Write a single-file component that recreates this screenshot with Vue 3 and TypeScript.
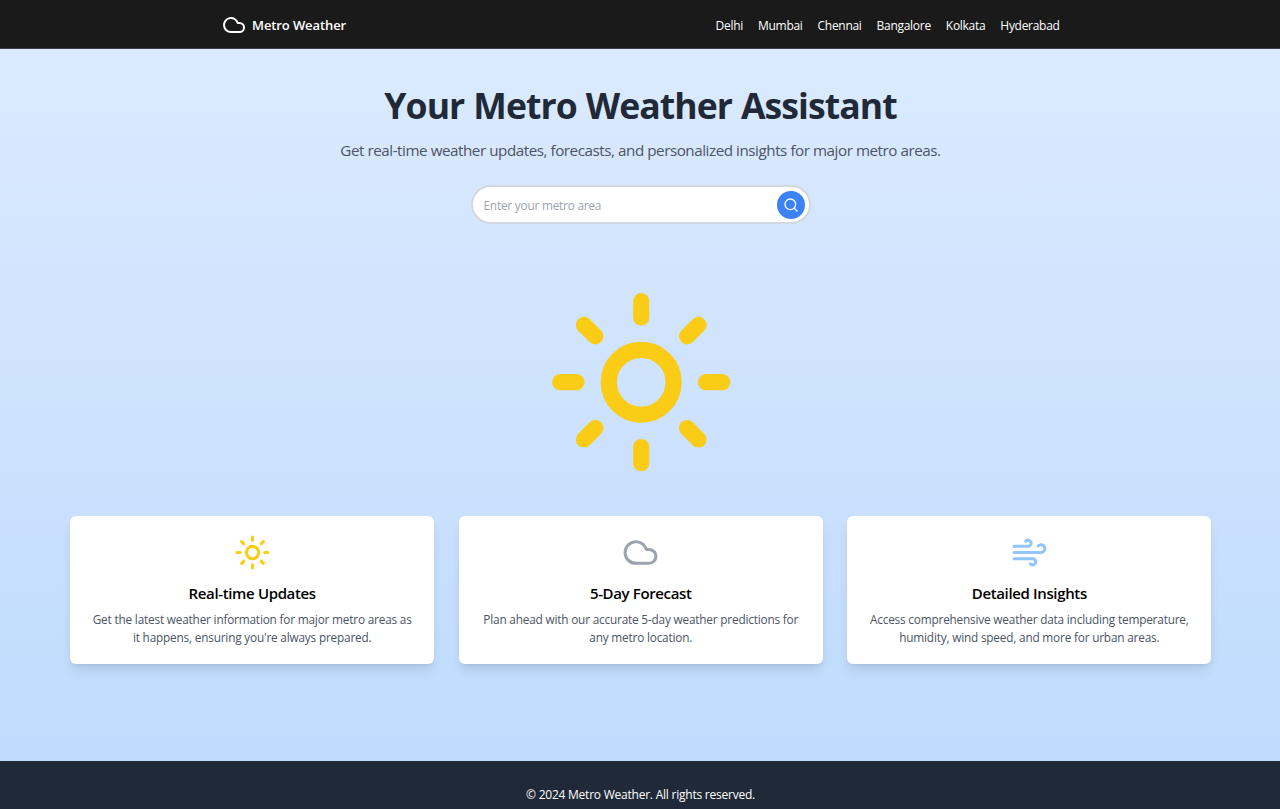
<script setup lang="ts">
type IconName = 'sun' | 'cloud' | 'wind'

interface Feature {
  icon: IconName
  title: string
  lines: string[]
}

const cities: string[] = ['Delhi', 'Mumbai', 'Chennai', 'Bangalore', 'Kolkata', 'Hyderabad']

const icons: Record<IconName, string[]> = {
  sun: [
    'M16 12a4 4 0 1 1-8 0a4 4 0 1 1 8 0Z',
    'M12 2v2',
    'M12 20v2',
    'm4.93 4.93 1.41 1.41',
    'm17.66 17.66 1.41 1.41',
    'M2 12h2',
    'M20 12h2',
    'm6.34 17.66-1.41 1.41',
    'm19.07 4.93-1.41 1.41',
  ],
  cloud: ['M17.5 19H9a7 7 0 1 1 6.71-9h1.79a4.5 4.5 0 1 1 0 9Z'],
  wind: [
    'M17.7 7.7a2.5 2.5 0 1 1 1.8 4.3H2',
    'M9.6 4.6A2 2 0 1 1 11 8H2',
    'M12.6 19.4A2 2 0 1 0 14 16H2',
  ],
}

const features: Feature[] = [
  {
    icon: 'sun',
    title: 'Real-time Updates',
    lines: ['Get the latest weather information for major metro areas as', "it happens, ensuring you're always prepared."],
  },
  {
    icon: 'cloud',
    title: '5-Day Forecast',
    lines: ['Plan ahead with our accurate 5-day weather predictions for', 'any metro location.'],
  },
  {
    icon: 'wind',
    title: 'Detailed Insights',
    lines: ['Access comprehensive weather data including temperature,', 'humidity, wind speed, and more for urban areas.'],
  },
]
</script>

<template>
  <div class="page">
    <header class="header">
      <div class="brand">
        <svg class="icon brand-icon" viewBox="0 0 24 24"><path v-for="d in icons.cloud" :key="d" :d="d" /></svg>
        <span class="brand-name">Metro Weather</span>
      </div>
      <nav class="nav">
        <a v-for="city in cities" :key="city">{{ city }}</a>
      </nav>
    </header>

    <main class="main">
      <h1 class="title">Your Metro Weather Assistant</h1>
      <p class="subtitle">Get real-time weather updates, forecasts, and personalized insights for major metro areas.</p>
      <form class="search" @submit.prevent>
        <input class="search-input" type="text" placeholder="Enter your metro area" />
        <button class="search-button" type="submit" aria-label="Search">
          <svg class="icon search-icon" viewBox="0 0 24 24"><circle cx="11" cy="11" r="8" /><path d="m21 21-4.3-4.3" /></svg>
        </button>
      </form>
      <svg class="icon hero" viewBox="0 0 24 24"><path v-for="d in icons.sun" :key="d" :d="d" /></svg>
      <section class="cards">
        <article v-for="f in features" :key="f.title" class="card">
          <svg class="icon card-icon" :class="f.icon" viewBox="0 0 24 24"><path v-for="d in icons[f.icon]" :key="d" :d="d" /></svg>
          <h2 class="card-title">{{ f.title }}</h2>
          <p class="card-text"><span v-for="line in f.lines" :key="line">{{ line }}</span></p>
        </article>
      </section>
    </main>

    <footer class="footer">© 2024 Metro Weather. All rights reserved.</footer>
  </div>
</template>

<style>
body {
  margin: 0;
  overflow: hidden;
}
</style>

<style scoped>
.page {
  box-sizing: border-box;
  height: 809px;
  display: flex;
  flex-direction: column;
  font-family: 'Open Sans', 'Noto Sans', sans-serif;
  font-size: 12px;
  overflow: hidden;
}
.icon {
  display: block;
  flex: none;
  fill: none;
  stroke: currentColor;
  stroke-width: 2;
  stroke-linecap: round;
  stroke-linejoin: round;
}
.header {
  box-sizing: border-box;
  height: 49px;
  flex: none;
  display: flex;
  align-items: center;
  justify-content: space-between;
  padding: 1px 220.4px 0 222px;
  background: #1a1a1a;
  border-bottom: 1px solid #3c4046;
  color: #fff;
}
.brand {
  display: flex;
  align-items: center;
  gap: 6px;
}
.brand-icon {
  width: 24px;
  height: 24px;
}
.brand-name {
  font-size: 13px;
  font-weight: 600;
  letter-spacing: -0.1px;
  white-space: nowrap;
}
.nav {
  display: flex;
  gap: 15px;
  padding-top: 1px;
  letter-spacing: -0.29px;
}
.main {
  flex: none;
  box-sizing: border-box;
  height: 712px;
  padding: 32px 0 0 1px;
  display: flex;
  flex-direction: column;
  align-items: center;
  background: linear-gradient(to bottom, #dbeafe, #bfdbfe);
}
.title {
  margin: 0;
  font-size: 35.6px;
  line-height: 48px;
  font-weight: 700;
  letter-spacing: -0.95px;
  word-spacing: 0.7px;
  color: #1f2937;
  white-space: nowrap;
}
.subtitle {
  margin: 8px 0 0;
  font-size: 15.2px;
  line-height: 26px;
  letter-spacing: -0.45px;
  color: #4b5563;
  white-space: nowrap;
}
.search {
  box-sizing: border-box;
  width: 340px;
  height: 39px;
  margin-top: 22.4px;
  padding: 0 4px 0 11px;
  display: flex;
  align-items: center;
  border: 2px solid #d3d7df;
  border-radius: 20px;
  background: #fff;
}
.search-input {
  flex: 1;
  min-width: 0;
  padding: 0;
  border: 0;
  outline: 0;
  background: transparent;
  font-family: inherit;
  font-size: 11.8px;
  letter-spacing: -0.2px;
}
.search-input::placeholder {
  color: #9ca3af;
  opacity: 1;
}
.search-button {
  width: 28px;
  height: 28px;
  padding: 0;
  display: flex;
  align-items: center;
  justify-content: center;
  border: 0;
  border-radius: 50%;
  background: #3b82f6;
  color: #fff;
}
.search-icon {
  width: 16px;
  height: 16px;
}
.hero {
  width: 194.4px;
  height: 194.4px;
  margin: 60.6px 0 0 0.5px;
  color: #facc15;
}
.cards {
  width: 1141.4px;
  margin: 36.6px 0 0 0.5px;
  display: grid;
  grid-template-columns: repeat(3, 1fr);
  gap: 24.3px;
}
.card {
  box-sizing: border-box;
  height: 148px;
  padding-top: 18px;
  display: flex;
  flex-direction: column;
  align-items: center;
  border-radius: 6px;
  background: #fff;
  box-shadow: 0 8px 12px -2px rgba(0, 0, 0, 0.1), 0 3px 5px -3px rgba(0, 0, 0, 0.1);
}
.card-icon {
  width: 37px;
  height: 37px;
}
.sun {
  color: #facc15;
}
.cloud {
  color: #9ca3af;
}
.wind {
  color: #93c5fd;
}
.card-title {
  margin: 11px 0 0;
  font-size: 15px;
  line-height: 23px;
  font-weight: 600;
  letter-spacing: -0.36px;
  color: #000;
  white-space: nowrap;
}
.card-text {
  margin: 5px 0 0;
  display: flex;
  flex-direction: column;
  align-items: center;
  font-size: 11.8px;
  line-height: 18px;
  letter-spacing: -0.185px;
  color: #4b5563;
  white-space: nowrap;
}
.footer {
  flex: none;
  box-sizing: border-box;
  height: 48px;
  padding: 24px 0 0 1px;
  background: #1f2937;
  color: #fff;
  line-height: 19px;
  letter-spacing: -0.23px;
  text-align: center;
}
</style>
